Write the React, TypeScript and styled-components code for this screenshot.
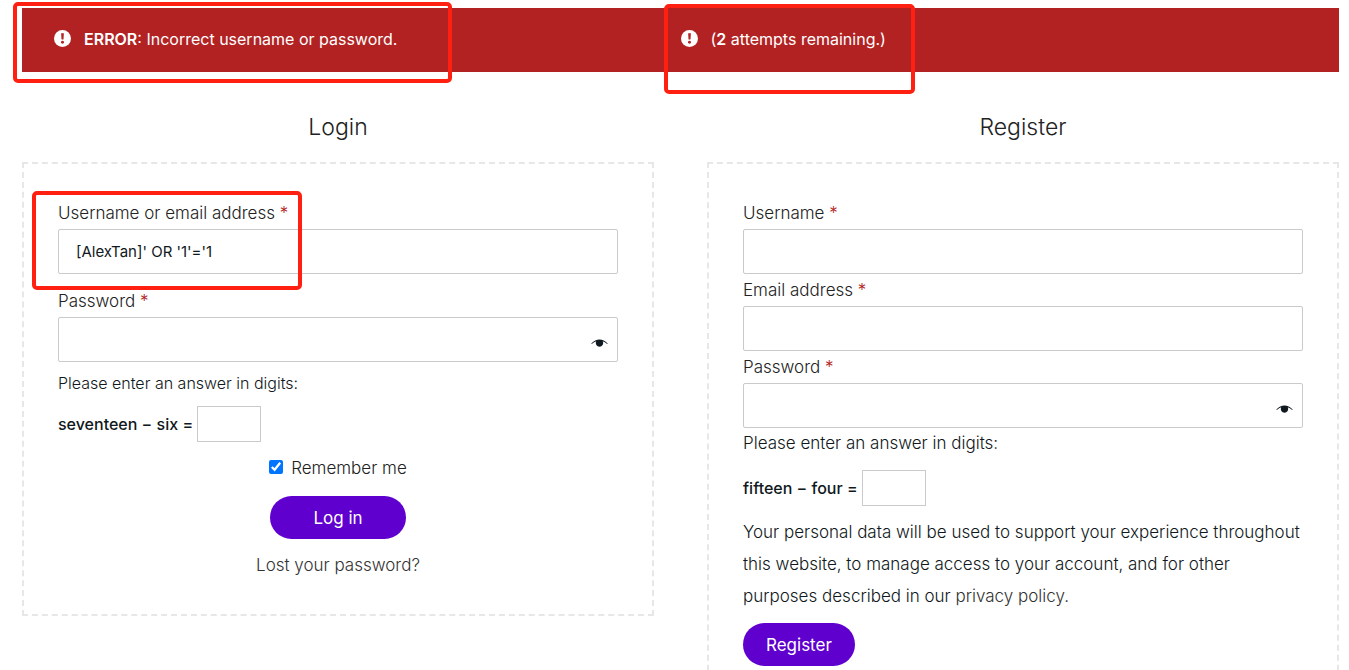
import React from "react";
import styled, { createGlobalStyle } from "styled-components";

const GlobalStyle = createGlobalStyle`
  *, *::before, *::after { box-sizing: border-box; }
  body {
    margin: 0;
    background: #fff;
    color: #101820;
    font-family: Inter, "Open Sans", sans-serif;
    font-size: 17px;
    font-weight: 300;
    line-height: 32px;
  }
  button, input { font: inherit; color: inherit; }
`;

const Page = styled.main`
  padding: 8px 10px 32px 22px;
`;

const Notices = styled.ul`
  display: grid;
  grid-template-columns: 1fr 1fr;
  margin: 0;
  padding: 15px 32px 17px;
  list-style: none;
  background: #b22222;
  color: #fff;
  font-size: 16px;
  font-weight: 400;
`;

const Notice = styled.li`
  position: relative;
  display: flex;
  align-items: center;
  gap: 13px;

  svg { margin-bottom: 1px; }
  strong { font-weight: 600; }
`;

const Highlight = styled.span<{ $top: number; $left: number; $width: number; $height: number }>`
  position: absolute;
  top: ${(p) => p.$top}px;
  left: ${(p) => p.$left}px;
  width: ${(p) => p.$width}px;
  height: ${(p) => p.$height}px;
  border: 4px solid #ff2012;
  border-radius: 5px;
  pointer-events: none;
`;

const Columns = styled.div`
  display: grid;
  grid-template-columns: 1fr 1fr;
  align-items: start;
  gap: 53px;
  margin-top: 39px;
`;

const Title = styled.h2`
  margin: 0 0 19px;
  color: #222;
  font-size: 23px;
  font-weight: 300;
  text-align: center;
`;

const Form = styled.form`
  padding: 33px 34px;
  border: 2px dashed #e7e7e7;
`;

const FieldBlock = styled.div<{ $spaced?: boolean }>`
  position: relative;
  margin-bottom: ${(p) => (p.$spaced ? 11 : 0)}px;
`;

const Label = styled.label`
  display: block;
  color: #222;
`;

const Required = styled.span`
  color: #b22222;
`;

const InputWrap = styled.div`
  position: relative;
`;

const TextInput = styled.input`
  display: block;
  width: 100%;
  height: 45px;
  padding: 0 17px;
  border: 1px solid #c9cacc;
  border-radius: 2px;
  background: #fff;
  font-size: 15px;
  font-weight: 400;
  outline: none;
`;

const EyeButton = styled.button`
  position: absolute;
  right: 10px;
  bottom: 15px;
  display: flex;
  padding: 0;
  border: 0;
  background: none;
`;

const CaptchaHint = styled.p<{ $compact?: boolean }>`
  margin: ${(p) => (p.$compact ? "6px 0 8px" : "0 0 12px")};
  font-size: ${(p) => (p.$compact ? 16 : 17)}px;
  line-height: 30px;
`;

const CaptchaRow = styled.label`
  display: flex;
  align-items: center;
  gap: 4px;
  margin-bottom: 10px;
  font-size: 16px;
  font-weight: 500;
`;

const CaptchaInput = styled.input`
  width: 64px;
  height: 36px;
  padding: 0 8px;
  border: 1px solid #c9cacc;
  outline: none;
`;

const Centered = styled.div`
  display: flex;
  flex-direction: column;
  align-items: center;
`;

const Remember = styled.label`
  display: flex;
  align-items: center;
  gap: 8px;
  margin-bottom: 12px;
  color: #222;

  input {
    width: 14px;
    height: 14px;
    margin: 0 0 3px;
    accent-color: #0075ff;
  }
`;

const PillButton = styled.button<{ $wide?: boolean }>`
  height: 43px;
  padding: 0 ${(p) => (p.$wide ? 43 : 23)}px;
  border: 0;
  border-radius: 22px;
  background: #5f00cf;
  color: #fff;
  font-weight: 400;
`;

const PlainLink = styled.a`
  color: #333;
  text-decoration: none;
`;

const LostPassword = styled.p`
  margin: 10px 0 0;
`;

const Privacy = styled.p`
  margin: 0 0 11px;
`;

const AlertIcon = () => (
  <svg width="17" height="17" viewBox="0 0 16 16" aria-hidden="true">
    <circle cx="8" cy="8" r="8" fill="#fff" />
    <path d="M6.7 3h2.600l-.4 6H7.100z" fill="#b22222" />
    <circle cx="8" cy="11.6" r="1.4" fill="#b22222" />
  </svg>
);

const EyeIcon = () => (
  <svg width="17" height="8" viewBox="0 0 17 8" aria-hidden="true">
    <path d="M.3 4.400C3 1.600 5.500.4 8.500.4s5.500 1.200 8.200 4l-.5.500C14.500 3.500 13 2.700 11.800 2.300a3.700 3.700 0 1 1-6.600 0C4 2.700 2.500 3.500.8 4.900z" fill="#101820" />
  </svg>
);

type FieldProps = {
  id: string;
  label: string;
  type?: string;
  value?: string;
  spaced?: boolean;
  children?: React.ReactNode;
};

const Field = ({ id, label, type = "text", value, spaced, children }: FieldProps) => (
  <FieldBlock $spaced={spaced}>
    <Label htmlFor={id}>
      {label} <Required>*</Required>
    </Label>
    <InputWrap>
      <TextInput id={id} type={type} defaultValue={value} />
      {type === "password" && (
        <EyeButton type="button" aria-label="Show password">
          <EyeIcon />
        </EyeButton>
      )}
    </InputWrap>
    {children}
  </FieldBlock>
);

export default function App() {
  return (
    <>
      <GlobalStyle />
      <Page>
        <Notices role="alert">
          <Notice>
            <AlertIcon />
            <span>
              <strong>ERROR</strong>: Incorrect username or password.
            </span>
            <Highlight $top={-21} $left={-41} $width={439} $height={81} />
          </Notice>
          <Notice>
            <AlertIcon />
            <span>
              (<strong>2</strong> attempts remaining.)
            </span>
            <Highlight $top={-19} $left={-17} $width={251} $height={90} />
          </Notice>
        </Notices>

        <Columns>
          <section>
            <Title>Login</Title>
            <Form>
              <Field id="login-user" label="Username or email address" value="[AlexTan]' OR '1'='1" spaced>
                <Highlight $top={-6} $left={-26} $width={270} $height={99} />
              </Field>
              <Field id="login-password" label="Password" type="password" />
              <CaptchaHint $compact>Please enter an answer in digits:</CaptchaHint>
              <CaptchaRow>
                seventeen − six =
                <CaptchaInput type="text" />
              </CaptchaRow>
              <Centered>
                <Remember>
                  <input type="checkbox" defaultChecked />
                  Remember me
                </Remember>
                <PillButton type="button" $wide>
                  Log in
                </PillButton>
                <LostPassword>
                  <PlainLink href="#lost-password">Lost your password?</PlainLink>
                </LostPassword>
              </Centered>
            </Form>
          </section>

          <section>
            <Title>Register</Title>
            <Form>
              <Field id="reg-user" label="Username" />
              <Field id="reg-email" label="Email address" type="email" />
              <Field id="reg-password" label="Password" type="password" />
              <CaptchaHint>Please enter an answer in digits:</CaptchaHint>
              <CaptchaRow>
                fifteen − four =
                <CaptchaInput type="text" />
              </CaptchaRow>
              <Privacy>
                Your personal data will be used to support your experience throughout this website, to manage
                access to your account, and for other purposes described in our{" "}
                <PlainLink href="#privacy">privacy policy</PlainLink>.
              </Privacy>
              <PillButton type="button">Register</PillButton>
            </Form>
          </section>
        </Columns>
      </Page>
    </>
  );
}
